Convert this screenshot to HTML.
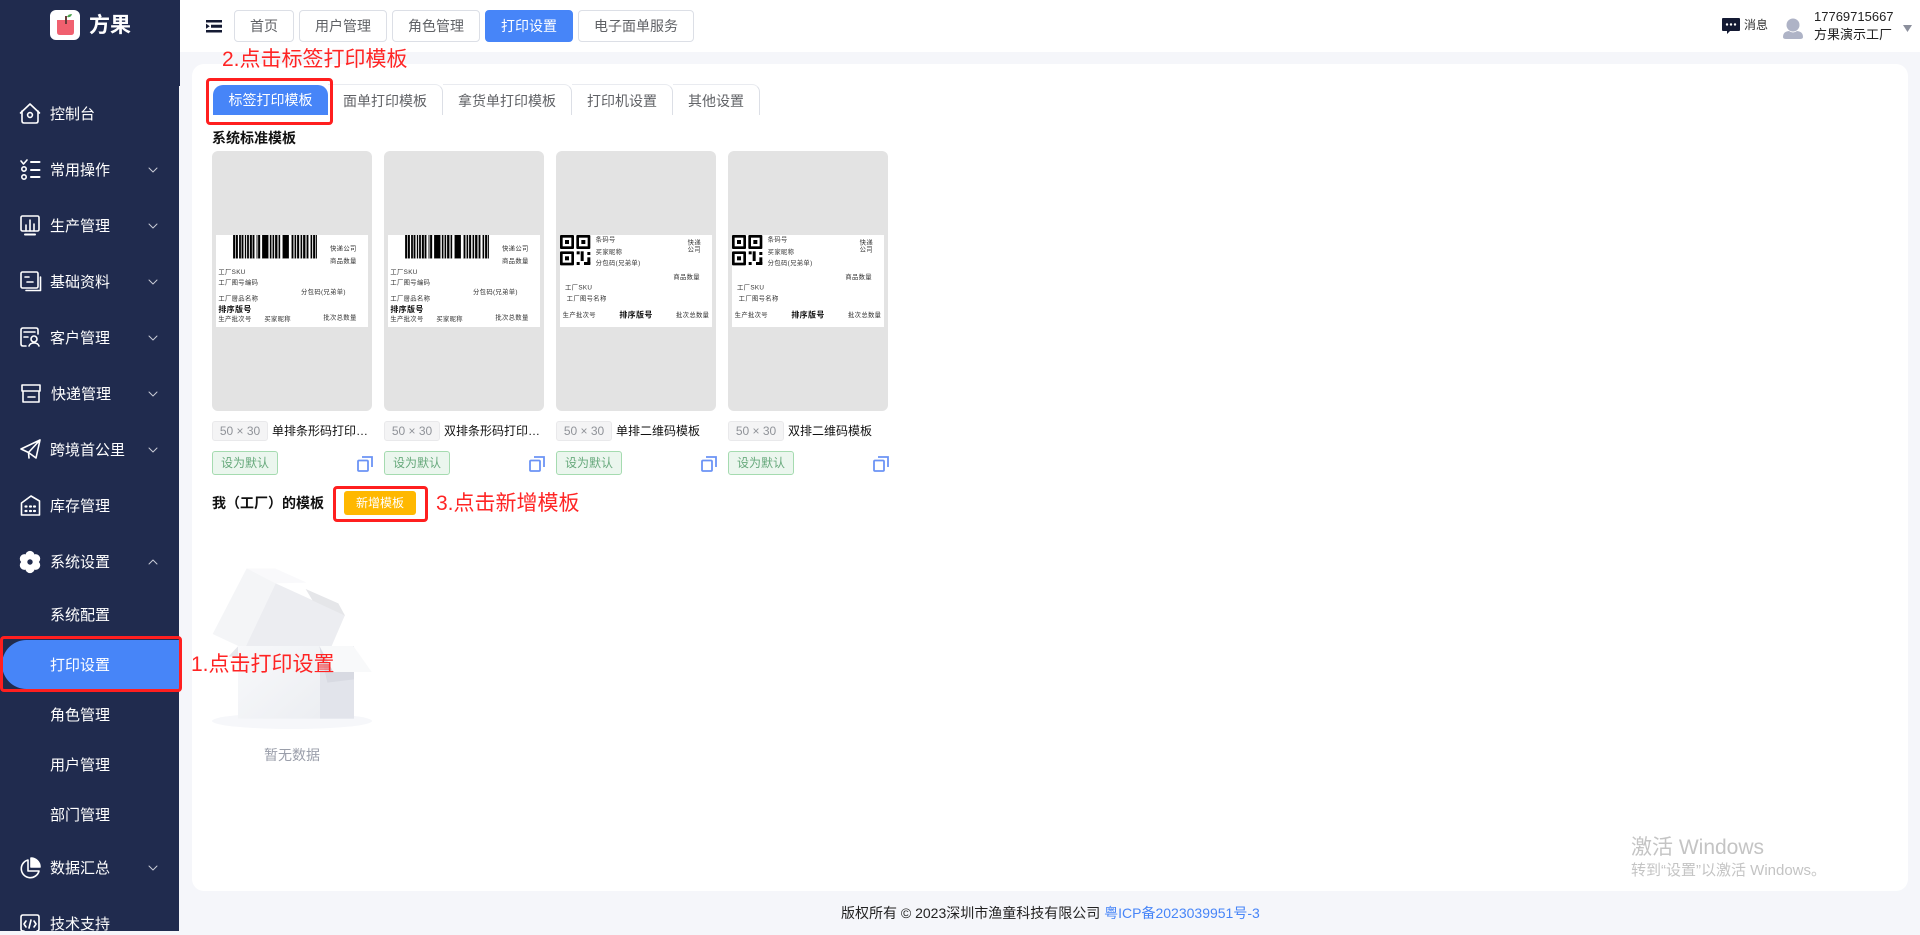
<!DOCTYPE html>
<html lang="zh-CN">
<head>
<meta charset="utf-8">
<title>打印设置</title>
<style>
html,body{margin:0;padding:0;width:1920px;height:931px;overflow:hidden;background:#f5f6fa;font-family:"Liberation Sans","Noto Sans CJK SC",sans-serif;}
*{box-sizing:border-box;}
.a{position:absolute;white-space:nowrap;}
.side{left:0;top:0;width:179px;height:931px;background:#202b4e;}
.nav{left:50px;width:125px;height:20px;line-height:20px;font-size:15px;color:#fff;}
.head{left:180px;top:0;width:1740px;height:52px;background:#fff;}
.ht{top:10px;height:32px;line-height:30px;font-size:14px;color:#606266;border:1px solid #dcdfe6;border-radius:4px;text-align:center;background:#fff;}
.ht.on{background:#4785f8;border-color:#4785f8;color:#fff;}
.card{left:192px;top:64px;width:1716px;height:827px;background:#fff;border-radius:12px;}
.tab{top:84px;height:31px;line-height:32px;font-size:14px;color:#606266;text-align:center;border-top:1px solid #e9ebf0;border-right:1px solid #dcdfe6;border-top-right-radius:8px;}
.tpl{top:151px;width:160px;height:260px;background:#e3e3e3;border-radius:6px;}
.lab{position:absolute;left:4px;top:84px;width:152px;height:92px;background:#fff;display:block;}
.tag{top:421px;width:56px;height:20px;line-height:18px;font-size:12px;color:#909399;background:#f4f4f5;border:1px solid #e9e9eb;border-radius:3px;text-align:center;}
.tn{top:421px;height:20px;line-height:20px;font-size:12px;color:#111;}
.def{top:451px;width:66px;height:24px;line-height:22px;font-size:12px;color:#67a97c;background:#ebf6ee;border:1px solid #a5dbb0;border-radius:3px;text-align:center;}
.red{border:3px solid #ff1f1f;border-radius:4px;}
.note{color:#ff2424;font-size:21px;line-height:28px;height:28px;}
svg text{font-family:"Liberation Sans","Noto Sans CJK SC",sans-serif;fill:#333;font-size:19px;letter-spacing:1px;}
svg text.b{font-weight:700;fill:#111;font-size:24px;letter-spacing:1px;}
</style>
</head>
<body>
<svg width="0" height="0" style="position:absolute">
<defs>
<g id="bars" fill="#000" stroke="#000" stroke-width="1">
<rect x="100" y="45" width="5" height="70"/><rect x="108" y="45" width="5" height="70"/><rect x="118" y="45" width="4" height="70"/><rect x="125" y="45" width="5" height="70"/><rect x="135" y="45" width="3" height="70"/><rect x="142" y="45" width="4" height="70"/><rect x="150" y="45" width="5" height="70"/><rect x="158" y="45" width="5" height="70"/><rect x="170" y="45" width="2" height="70"/><rect x="175" y="45" width="5" height="70"/><rect x="187" y="45" width="18" height="70"/><rect x="210" y="45" width="4" height="70"/><rect x="218" y="45" width="4" height="70"/><rect x="226" y="45" width="6" height="70"/><rect x="236" y="45" width="4" height="70"/><rect x="248" y="45" width="18" height="70"/><rect x="275" y="45" width="5" height="70"/><rect x="284" y="45" width="4" height="70"/><rect x="292" y="45" width="5" height="70"/><rect x="302" y="45" width="4" height="70"/><rect x="310" y="45" width="6" height="70"/><rect x="320" y="45" width="5" height="70"/><rect x="332" y="45" width="4" height="70"/><rect x="340" y="45" width="5" height="70"/><rect x="348" y="45" width="2" height="70"/>
</g>
<g id="qr">
<rect x="60" y="45" width="42" height="42" rx="3" fill="#000"/><rect x="68" y="53" width="26" height="26" fill="#fff"/><rect x="75" y="60" width="12" height="12" fill="#000"/>
<rect x="109" y="45" width="42" height="42" rx="3" fill="#000"/><rect x="117" y="53" width="26" height="26" fill="#fff"/><rect x="124" y="60" width="12" height="12" fill="#000"/>
<rect x="60" y="94" width="42" height="42" rx="3" fill="#000"/><rect x="68" y="102" width="26" height="26" fill="#fff"/><rect x="75" y="109" width="12" height="12" fill="#000"/>
<rect x="110" y="94" width="9" height="9" fill="#000"/><rect x="122" y="94" width="9" height="20" fill="#000"/><rect x="142" y="96" width="9" height="9" fill="#000"/><rect x="110" y="126" width="9" height="9" fill="#000"/><rect x="122" y="114" width="9" height="9" fill="#000"/><rect x="132" y="126" width="19" height="9" fill="#000"/><rect x="142" y="112" width="9" height="20" fill="#000"/>
</g>
</defs>
</svg>

<div class="a side"></div>
<div class="a" style="left:179px;top:0;width:1px;height:86px;background:#202b4e"></div>

<div class="a" style="left:50px;top:10px;width:30px;height:30px;background:#fff;border-radius:6px"></div>
<svg class="a" style="left:50px;top:10px" width="30" height="30" viewBox="0 0 30 30">
<path d="M7 10 H24 V22 Q24 25 21 25 H10 Q7 25 7 22Z" fill="#f0606f"/>
<rect x="15" y="6" width="2" height="8" fill="#6b3a3a"/>
<path d="M17 7 Q18 4 22 4 Q21 8 17 7Z" fill="#4aa34a"/>
</svg>
<div class="a" style="left:89px;top:12px;font-size:21px;line-height:28px;font-weight:700;color:#fff">方果</div>

<svg class="a" style="left:0;top:0" width="180" height="931" viewBox="0 0 180 931" fill="none" stroke="#fff" stroke-width="1.6" stroke-linecap="round" stroke-linejoin="round">
<path d="M20.5 113 L30 104 L39.5 113"/><path d="M22 111 V121 Q22 123 24 123 H36 Q38 123 38 121 V111"/><circle cx="30" cy="115" r="2.4"/>
<path d="M21 161 l2.5 3 l3.5 -4"/><circle cx="24" cy="169" r="2.2"/><circle cx="24" cy="177" r="2.2"/><path d="M31 162 H39.5 M31 170 H39.5 M31 177 H39.5" stroke-width="2"/>
<rect x="21" y="216" width="18" height="15" rx="1.5"/><path d="M26 231 V225 M30 231 V220 M34 231 V224"/><path d="M25 234.5 H35" stroke-width="2"/>
<rect x="21" y="272" width="17" height="16" rx="1.5"/><path d="M25 277 H29 M27 282 H33"/><path d="M40.5 277 V290.5 H26"/>
<path d="M38 334 V330 Q38 328 36 328 H23 Q21 328 21 330 V344 Q21 346 23 346 H26 M24 332 H35 M24 337 H28"/><circle cx="34" cy="339" r="3"/><path d="M29 346 Q30 343 34 343 Q38 343 39 346"/>
<path d="M22 391 V385 H40 V391 Z M23 392 V402 H39 V392 M28 397 H35"/>
<path d="M21 449 L40 440 L36 458 L28.500 452.500 Z M40 440 L28.500 452.500 L29 458"/>
<path d="M21.500 515 V503 L31 496 L39.500 501 V515 Z"/><path d="M25.500 506.500 h1 M30 506.500 h1 M34 506.500 h1 M25.500 511 h1 M30 511 h1 M34 511 h1" stroke-width="2.200"/>
<g fill="#fff" stroke="none"><circle cx="30" cy="555.500" r="4.600"/><circle cx="30" cy="568.500" r="4.600"/><circle cx="24.400" cy="558.700" r="4.600"/><circle cx="35.600" cy="558.700" r="4.600"/><circle cx="24.400" cy="565.300" r="4.600"/><circle cx="35.600" cy="565.300" r="4.600"/><circle cx="30" cy="562" r="5"/></g>
<circle cx="30" cy="562" r="2.700" fill="#202b4e" stroke="none"/>
<path d="M28 860 A9 9 0 1 0 39 871 H28 Z"/><path d="M31 858 A9 9 0 0 1 40 867 H31 Z" fill="#fff"/>
<path d="M24 931 H23 Q21 931 21 929 V917 Q21 915 23 915 H37 Q39 915 39 917 V929 Q39 931 37 931"/><path d="M26 921 L24 924 L26 927 M34 921 L36 924 L34 927 M31 920 L29 928"/>
<g stroke="#c9ccd6" stroke-width="1">
<path d="M149 168 L153 172 L157 168"/><path d="M149 224 L153 228 L157 224"/><path d="M149 280 L153 284 L157 280"/><path d="M149 336 L153 340 L157 336"/><path d="M149 392 L153 396 L157 392"/><path d="M149 448 L153 452 L157 448"/><path d="M149 564 L153 560 L157 564"/><path d="M149 866 L153 870 L157 866"/>
</g>
</svg>

<div class="a nav" style="top:105px">控制台</div>
<div class="a nav" style="top:161px">常用操作</div>
<div class="a nav" style="top:217px">生产管理</div>
<div class="a nav" style="top:273px">基础资料</div>
<div class="a nav" style="top:329px">客户管理</div>
<div class="a nav" style="top:385px;left:51px">快递管理</div>
<div class="a nav" style="top:441px">跨境首公里</div>
<div class="a nav" style="top:497px">库存管理</div>
<div class="a nav" style="top:553px">系统设置</div>
<div class="a nav" style="top:606px">系统配置</div>
<div class="a" style="left:2px;top:640px;width:177px;height:49px;background:#4785f8;border-radius:25px 0 0 25px"></div>
<div class="a nav" style="top:656px">打印设置</div>
<div class="a nav" style="top:706px">角色管理</div>
<div class="a nav" style="top:756px">用户管理</div>
<div class="a nav" style="top:806px">部门管理</div>
<div class="a nav" style="top:859px">数据汇总</div>
<div class="a nav" style="top:915px">技术支持</div>

<div class="a head"></div>
<svg class="a" style="left:206px;top:20px" width="17" height="13" viewBox="0 0 17 13"><path d="M0 0 H16 V2.500 H0 Z M5 4.800 H16 V7.700 H5 Z M0 10 H16 V12.500 H0 Z" fill="#141a33"/><path d="M0 3.600 L3.800 6.200 L0 8.800 Z" fill="#141a33"/></svg>
<div class="a ht" style="left:234px;width:60px">首页</div>
<div class="a ht" style="left:299px;width:88px">用户管理</div>
<div class="a ht" style="left:392px;width:88px">角色管理</div>
<div class="a ht on" style="left:485px;width:88px">打印设置</div>
<div class="a ht" style="left:578px;width:116px">电子面单服务</div>

<svg class="a" style="left:1722px;top:18px" width="18" height="17" viewBox="0 0 18 17"><path d="M1 0 H17 Q18 0 18 1 V12 Q18 13 17 13 H8 L5 16 V13 H1 Q0 13 0 12 V1 Q0 0 1 0Z" fill="#141a33"/><circle cx="5" cy="6.500" r="1.200" fill="#fff"/><circle cx="9" cy="6.500" r="1.200" fill="#fff"/><circle cx="13" cy="6.500" r="1.200" fill="#fff"/></svg>
<div class="a" style="left:1744px;top:16px;font-size:12px;line-height:18px;color:#333">消息</div>
<svg class="a" style="left:1783px;top:18px" width="20" height="22" viewBox="0 0 20 22"><circle cx="10" cy="7" r="6.500" fill="#aeb3c6"/><path d="M0 19 Q0 13.500 6 13 Q10 16 14 13 Q20 13.500 20 19 Q20 21 17 21 H3 Q0 21 0 19Z" fill="#aeb3c6"/></svg>
<div class="a" style="left:1814px;top:8px;font-size:13px;line-height:18px;color:#222">17769715667</div>
<div class="a" style="left:1814px;top:26px;font-size:13px;line-height:18px;color:#222">方果演示工厂</div>
<svg class="a" style="left:1903px;top:25px" width="9" height="7" viewBox="0 0 9 7"><path d="M0 0 H9 L4.500 7 Z" fill="#8b8f9c"/></svg>

<div class="a card"></div>

<div class="a tab" style="left:328px;width:115px;border-top-left-radius:0">面单打印模板</div>
<div class="a tab" style="left:443px;width:129px">拿货单打印模板</div>
<div class="a tab" style="left:572px;width:101px">打印机设置</div>
<div class="a tab" style="left:673px;width:87px">其他设置</div>
<div class="a" style="left:213px;top:85px;width:115px;height:30px;line-height:31px;background:#4785f8;color:#fff;font-size:14px;text-align:center;border-radius:10px 10px 0 0">标签打印模板</div>

<div class="a" style="left:212px;top:128px;font-size:14px;line-height:20px;font-weight:700;color:#111">系统标准模板</div>

<div class="a tpl" style="left:212px"><svg class="lab" viewBox="48 45 456 276"><use href="#bars"/>
<text x="390" y="92">快递公司</text><text x="390" y="129">商品数量</text><text x="55" y="162">工厂SKU</text><text x="55" y="193">工厂图号编码</text><text x="303" y="222">分包码(兄弟单)</text><text x="55" y="241">工厂層品名称</text><text class="b" x="55" y="276">排序版号</text><text x="55" y="303">生产批次号</text><text x="193" y="303">买家昵称</text><text x="370" y="298">批次总数量</text></svg></div>
<div class="a tpl" style="left:384px"><svg class="lab" viewBox="48 45 456 276"><use href="#bars"/>
<text x="390" y="92">快递公司</text><text x="390" y="129">商品数量</text><text x="55" y="162">工厂SKU</text><text x="55" y="193">工厂图号编码</text><text x="303" y="222">分包码(兄弟单)</text><text x="55" y="241">工厂層品名称</text><text class="b" x="55" y="276">排序版号</text><text x="55" y="303">生产批次号</text><text x="193" y="303">买家昵称</text><text x="370" y="298">批次总数量</text></svg></div>
<div class="a tpl" style="left:556px"><svg class="lab" viewBox="60 45 456 276"><use href="#qr"/>
<text x="167" y="65">条码号</text><text x="167" y="102">买家昵称</text><text x="167" y="135">分包码(兄弟单)</text><text x="443" y="74">快递</text><text x="443" y="95">公司</text><text x="400" y="177">商品数量</text><text x="75" y="209">工厂SKU</text><text x="80" y="241">工厂图号名称</text><text x="68" y="291">生产批次号</text><text class="b" x="238" y="293">排序版号</text><text x="408" y="291">批次总数量</text></svg></div>
<div class="a tpl" style="left:728px"><svg class="lab" viewBox="60 45 456 276"><use href="#qr"/>
<text x="167" y="65">条码号</text><text x="167" y="102">买家昵称</text><text x="167" y="135">分包码(兄弟单)</text><text x="443" y="74">快递</text><text x="443" y="95">公司</text><text x="400" y="177">商品数量</text><text x="75" y="209">工厂SKU</text><text x="80" y="241">工厂图号名称</text><text x="68" y="291">生产批次号</text><text class="b" x="238" y="293">排序版号</text><text x="408" y="291">批次总数量</text></svg></div>

<div class="a tag" style="left:212px">50 × 30</div><div class="a tn" style="left:272px">单排条形码打印…</div>
<div class="a tag" style="left:384px">50 × 30</div><div class="a tn" style="left:444px">双排条形码打印…</div>
<div class="a tag" style="left:556px">50 × 30</div><div class="a tn" style="left:616px">单排二维码模板</div>
<div class="a tag" style="left:728px">50 × 30</div><div class="a tn" style="left:788px">双排二维码模板</div>

<div class="a def" style="left:212px">设为默认</div>
<div class="a def" style="left:384px">设为默认</div>
<div class="a def" style="left:556px">设为默认</div>
<div class="a def" style="left:728px">设为默认</div>

<svg class="a" style="left:357px;top:456px" width="16" height="16" viewBox="0 0 16 16" fill="none" stroke="#6b93f5" stroke-width="1.800"><rect x="1" y="4.500" width="10" height="10.500" rx="1"/><path d="M5 1 H15 V11"/></svg>
<svg class="a" style="left:529px;top:456px" width="16" height="16" viewBox="0 0 16 16" fill="none" stroke="#6b93f5" stroke-width="1.800"><rect x="1" y="4.500" width="10" height="10.500" rx="1"/><path d="M5 1 H15 V11"/></svg>
<svg class="a" style="left:701px;top:456px" width="16" height="16" viewBox="0 0 16 16" fill="none" stroke="#6b93f5" stroke-width="1.800"><rect x="1" y="4.500" width="10" height="10.500" rx="1"/><path d="M5 1 H15 V11"/></svg>
<svg class="a" style="left:873px;top:456px" width="16" height="16" viewBox="0 0 16 16" fill="none" stroke="#6b93f5" stroke-width="1.800"><rect x="1" y="4.500" width="10" height="10.500" rx="1"/><path d="M5 1 H15 V11"/></svg>

<div class="a" style="left:212px;top:493px;font-size:14px;line-height:20px;font-weight:700;color:#111">我（工厂）的模板</div>
<div class="a" style="left:344px;top:491px;width:72px;height:24px;line-height:24px;background:#ffb800;color:#fff;font-size:12px;text-align:center;border-radius:3px">新增模板</div>

<svg class="a" style="left:190px;top:560px" width="200" height="180" viewBox="0 0 600 540">
<defs>
<linearGradient id="fg" x1="0" y1="0" x2="1" y2="1"><stop offset="0" stop-color="#f8f9fb"/><stop offset="1" stop-color="#eceef2"/></linearGradient>
</defs>
<ellipse cx="306" cy="483" rx="240" ry="24" fill="#f6f7fa"/>
<path d="M170 25 L255 25 L350 68 L257 70 Z" fill="#f9f9fb"/>
<path d="M170 25 L257 70 L168 258 L145 258 L68 222 Z" fill="#f4f5f7"/>
<path d="M257 70 L465 165 L425 258 L168 258 Z" fill="#ecedf1"/>
<path d="M347 87 L445 130 L465 167 L368 122 Z" fill="#e5e6e9"/>
<path d="M145 258 L115 290 L145 290 Z" fill="#e6e7ec"/>
<rect x="144" y="258" width="246" height="218" fill="url(#fg)"/>
<rect x="390" y="258" width="102" height="218" fill="#e2e4eb"/>
<path d="M388 258 L490 258 L545 336 L430 336 Z" fill="#f8f9fa"/>
<path d="M388 258 L430 336 L492 336 L492 358 L412 368 Z" fill="#d8dae2"/>
</svg>
<div class="a" style="left:264px;top:745px;font-size:14px;line-height:20px;color:#9a9eaa">暂无数据</div>

<div class="a red" style="left:206px;top:78px;width:127px;height:47px"></div>
<div class="a red" style="left:0;top:636px;width:182px;height:56px"></div>
<div class="a red" style="left:333px;top:486px;width:95px;height:36px"></div>
<div class="a note" style="left:222px;top:46px">2.点击标签打印模板</div>
<div class="a note" style="left:191px;top:651px">1.点击打印设置</div>
<div class="a note" style="left:436px;top:490px">3.点击新增模板</div>

<div class="a" style="left:1631px;top:834px;font-size:21px;line-height:28px;color:#c4c4c4">激活 Windows</div>
<div class="a" style="left:1631px;top:861px;font-size:15px;line-height:20px;color:#c4c4c4">转到“设置”以激活 Windows。</div>

<div class="a" style="left:841px;top:904px;font-size:14px;line-height:18px;color:#222">版权所有 © 2023深圳市渔童科技有限公司 <span style="color:#4785f8">粤ICP备2023039951号-3</span></div>
</body>
</html>
